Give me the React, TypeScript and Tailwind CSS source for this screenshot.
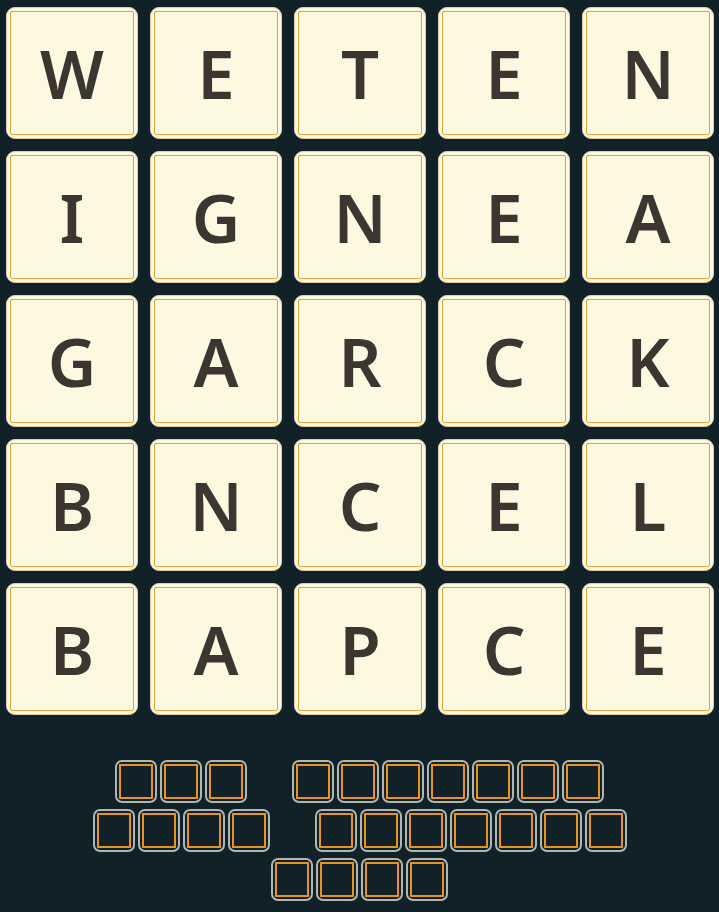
import React from "react";

const grid = [
  ["W", "E", "T", "E", "N"],
  ["I", "G", "N", "E", "A"],
  ["G", "A", "R", "C", "K"],
  ["B", "N", "C", "E", "L"],
  ["B", "A", "P", "C", "E"],
];

const rows: number[][] = [
  [3, 7],
  [4, 7],
  [4],
];

function Tile({ ch }: { ch: string }) {
  return (
    <div className="w-[132px] h-[132px] rounded-[9px] bg-[#fdf9e1] border border-[#d9d3b8] p-[3px] flex">
      <div className="flex-1 border-[1.5px] border-[#e9a23a] rounded-[2px] flex items-center justify-center">
        <span
          className="text-[67px] leading-none font-semibold text-[#3b3730]"
          style={{ fontFamily: "'Noto Sans', Lato, sans-serif" }}
        >
          {ch}
        </span>
      </div>
    </div>
  );
}

function Slot() {
  return (
    <div className="w-[42px] h-[43px] rounded-[7px] border-2 border-[#aeb7b3] p-[2px] flex">
      <div className="flex-1 border-2 border-[#e8921f]" />
    </div>
  );
}

export default function App() {
  return (
    <div className="w-[719px] h-[912px] bg-[#122027] overflow-hidden">
      <div className="pl-[6px] pt-[7px] grid grid-cols-[repeat(5,132px)] gap-[12px]">
        {grid.flat().map((c, i) => (
          <Tile key={i} ch={c} />
        ))}
      </div>
      <div className="mt-[45px] flex flex-col items-center gap-[6px]">
        {rows.map((r, ri) => (
          <div key={ri} className="flex gap-[45px]">
            {r.map((n, gi) => (
              <div key={gi} className="flex gap-[3px]">
                {Array.from({ length: n }).map((_, k) => (
                  <Slot key={k} />
                ))}
              </div>
            ))}
          </div>
        ))}
      </div>
    </div>
  );
}
